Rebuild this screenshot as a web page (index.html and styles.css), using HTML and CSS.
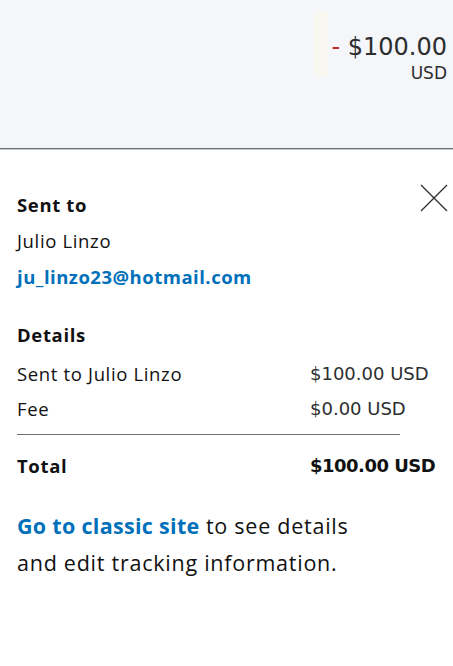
FILE: index.html
```html
<!DOCTYPE html>
<html>
<head>
<meta charset="utf-8">
<link rel="stylesheet" href="styles.css">
</head>
<body>
<header class="top">
  <div class="glow"></div>
  <div class="amount">
    <div class="amount-line"><span class="minus">-</span> $100.00</div>
    <div class="currency">USD</div>
  </div>
</header>
<main class="panel">
  <section class="sent">
    <div class="sent-head">
      <h2 class="label">Sent to</h2>
      <button class="close" aria-label="Close">
        <svg width="28" height="28" viewBox="0 0 28 28"><path d="M1 1 L27 27 M27 1 L1 27" stroke="#2c2e2f" stroke-width="1.3" fill="none"/></svg>
      </button>
    </div>
    <p class="line">Julio Linzo</p>
    <p class="line"><a class="email" href="#">ju_linzo23@hotmail.com</a></p>
  </section>
  <section class="details">
    <h2 class="label">Details</h2>
    <div class="row first"><span>Sent to Julio Linzo</span><span class="num">$100.00 USD</span></div>
    <div class="row"><span>Fee</span><span class="num">$0.00 USD</span></div>
    <hr class="rule">
    <div class="row total"><span>Total</span><span class="num">$100.00 USD</span></div>
  </section>
  <p class="classic"><a class="link" href="#">Go to classic site</a> to see details<br>and edit tracking information.</p>
</main>
</body>
</html>
```
FILE: styles.css
```css
* { box-sizing: border-box; }
body {
  margin: 0;
  font-family: "Open Sans", "Noto Sans", sans-serif;
  color: #111;
  background: #fff;
  letter-spacing: 0.65px;
}
.top {
  height: 149px;
  background: #f5f6fa;
  border-bottom: 1px solid #6b7275;
  box-shadow: 0 1px 0 #c9cbcd;
  display: flex;
  justify-content: flex-end;
  align-items: flex-start;
  padding-right: 6px;
}
.glow {
  width: 14px;
  height: 64px;
  margin-top: 12px;
  margin-right: 3px;
  background: #f8f8f1;
}
.amount {
  padding-top: 32px;
  text-align: right;
  font-family: "DejaVu Sans", sans-serif;
  letter-spacing: 0;
  color: #2c2e2f;
}
.amount-line {
  font-size: 24px;
  line-height: 30px;
}
.minus { color: #c0262b; }
.currency {
  font-size: 17px;
  line-height: 21px;
  padding-top: 1px;
}
.panel { padding: 0 17px 0 17px; }
.sent { padding-top: 30px; }
.sent-head {
  display: flex;
  justify-content: space-between;
  align-items: flex-start;
}
.label {
  margin: 0;
  font-size: 18.5px;
  font-weight: 700;
  line-height: 22px;
  padding-top: 15px;
}
.close {
  border: 0;
  background: none;
  padding: 0;
  margin-top: 5px;
  margin-right: -12px;
  width: 28px;
  height: 28px;
}
.line {
  margin: 14px 0 0;
  font-size: 18.5px;
  line-height: 22px;
}
.email {
  color: #0070ba;
  font-weight: 700;
  text-decoration: none;
  letter-spacing: 0.5px;
}
.details { padding-top: 21px; }
.details .label { padding-top: 15px; }
.row {
  display: flex;
  justify-content: space-between;
  padding-top: 13px;
  font-size: 18.5px;
  line-height: 22px;
}
.row.first { padding-top: 17px; }
.num {
  width: 126px;
  font-family: "DejaVu Sans", sans-serif;
  font-size: 18px;
  letter-spacing: 0;
  color: #2c2e2f;
}
.rule {
  margin: 14px 0 0;
  width: 383px;
  border: 0;
  border-top: 1px solid #6b7275;
}
.total { padding-top: 20px; font-weight: 700; }
.total .num { letter-spacing: -0.5px; color: #111; }
.classic {
  margin: 30px 0 0;
  font-size: 21.5px;
  line-height: 37px;
  letter-spacing: 0.75px;
}
.link {
  color: #0070ba;
  font-weight: 700;
  text-decoration: none;
  letter-spacing: 0.3px;
}
```
